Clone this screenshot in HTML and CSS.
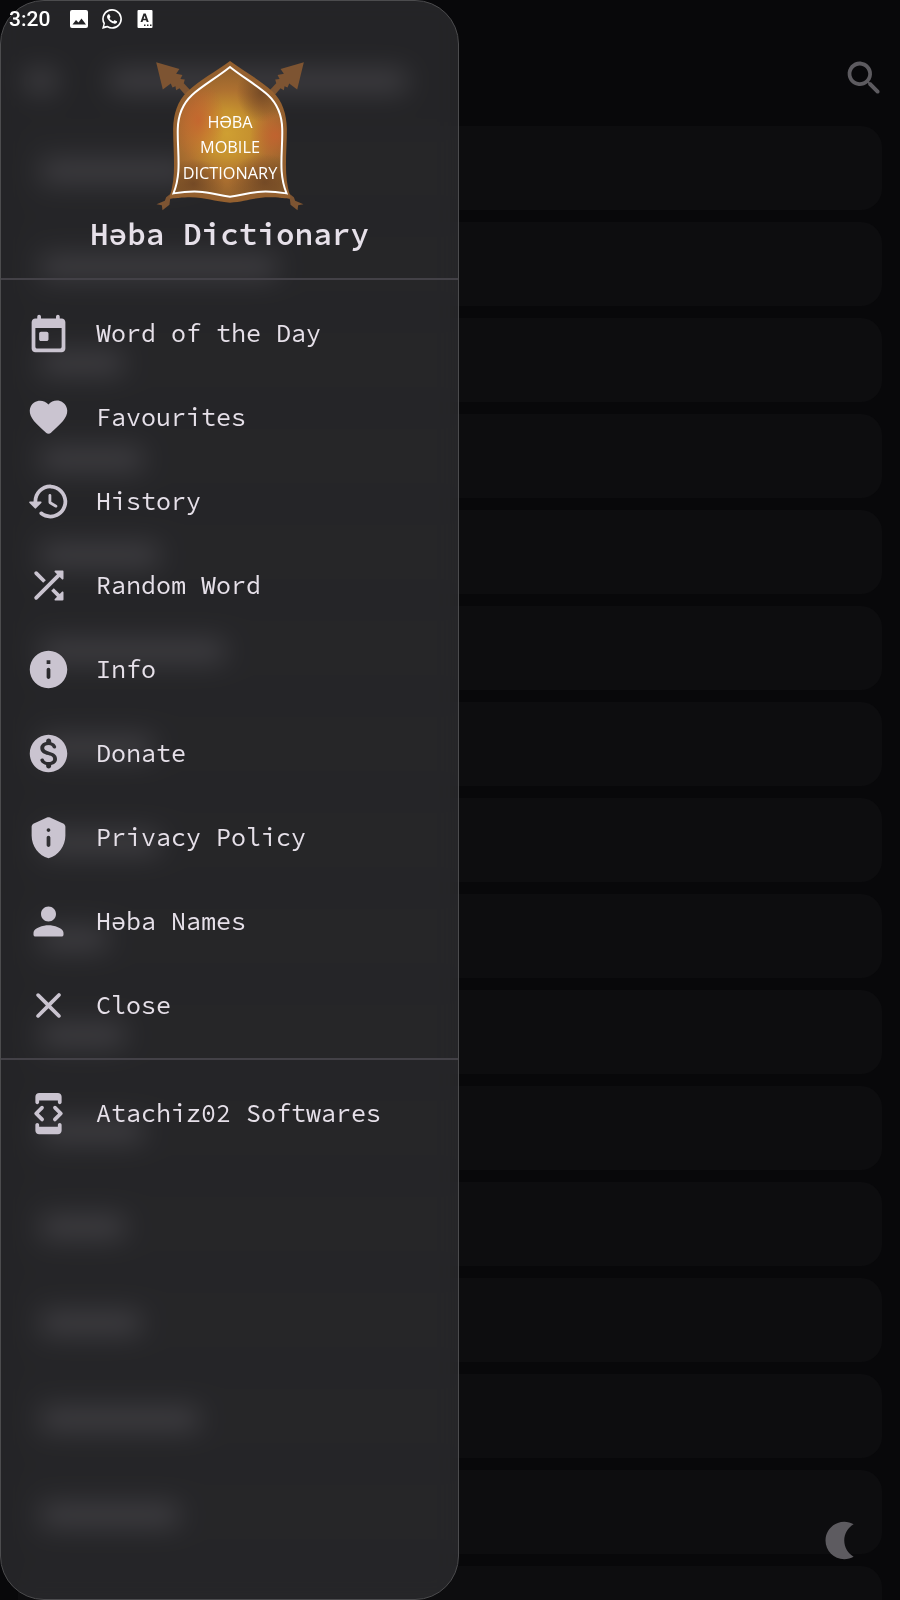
FILE: index.html
```html
<!DOCTYPE html>
<html lang="en">
<head>
<meta charset="utf-8">
<meta name="viewport" content="width=device-width, initial-scale=1">
<title>Həba Dictionary</title>
<link rel="stylesheet" href="styles.css">
</head>
<body>
<div class="app">
  <main class="page">
    <header class="app-bar">
      <span class="bar-menu"></span>
      <span class="bar-title"></span>
      <button class="icon-button" type="button" aria-label="Search">
        <svg class="icon" viewBox="0 0 24 24"><path d="M15.5 14h-.79l-.28-.27c1.2-1.4 1.82-3.31 1.48-5.34-.47-2.78-2.79-5-5.59-5.34-4.23-.52-7.79 3.04-7.27 7.27.34 2.8 2.56 5.12 5.34 5.59 2.03.34 3.94-.28 5.34-1.48l.27.28v.79l4.25 4.25c.41.41 1.08.41 1.49 0 .41-.41.41-1.08 0-1.49L15.5 14zm-6 0C7.01 14 5 11.99 5 9.5S7.01 5 9.5 5 14 7.01 14 9.5 11.99 14 9.5 14z"/></svg>
      </button>
    </header>
    <ul class="words">
      <li class="card"><span class="word" style="width:150px"></span></li>
      <li class="card"><span class="word" style="width:238px"></span></li>
      <li class="card"><span class="word" style="width:84px"></span></li>
      <li class="card"><span class="word" style="width:104px"></span></li>
      <li class="card"><span class="word" style="width:120px"></span></li>
      <li class="card"><span class="word" style="width:186px"></span></li>
      <li class="card"><span class="word" style="width:114px"></span></li>
      <li class="card"><span class="word" style="width:120px"></span></li>
      <li class="card"><span class="word" style="width:68px"></span></li>
      <li class="card"><span class="word" style="width:86px"></span></li>
      <li class="card"><span class="word" style="width:104px"></span></li>
      <li class="card"><span class="word" style="width:86px"></span></li>
      <li class="card"><span class="word" style="width:102px"></span></li>
      <li class="card"><span class="word" style="width:160px"></span></li>
      <li class="card"><span class="word" style="width:140px"></span></li>
      <li class="card"></li>
    </ul>
  </main>

  <button class="icon-button theme-toggle" type="button" aria-label="Dark mode">
    <svg class="icon" viewBox="0 0 24 24"><path d="M14 2c1.82 0 3.53.5 5 1.35-2.99 1.73-5 4.95-5 8.65s2.01 6.92 5 8.65C17.53 21.5 15.82 22 14 22 8.48 22 4 17.52 4 12S8.48 2 14 2z"/></svg>
  </button>

  <aside class="drawer">
    <div class="brand">
      <svg class="logo" viewBox="45 30 450 460" aria-hidden="true">
        <defs>
          <radialGradient id="glow" gradientUnits="userSpaceOnUse" cx="262" cy="255" r="215">
            <stop offset="0" stop-color="#cf9f32"/>
            <stop offset=".32" stop-color="#c6922f"/>
            <stop offset=".62" stop-color="#ad7030"/>
            <stop offset="1" stop-color="#8a5d2b"/>
          </radialGradient>
          <radialGradient id="ember"><stop offset="0" stop-color="#c6602f" stop-opacity=".8"/><stop offset="1" stop-color="#c6602f" stop-opacity="0"/></radialGradient>
          <radialGradient id="shade"><stop offset="0" stop-color="#6e4524" stop-opacity=".85"/><stop offset="1" stop-color="#6e4524" stop-opacity="0"/></radialGradient>
          <clipPath id="tent"><path d="M270 54C310 86 350 108 384 138C414 166 426 196 427 240C429 310 414 370 440 434C350 420 330 436 270 444C210 436 190 420 100 434C126 370 111 310 113 240C114 196 126 166 156 138C190 108 230 86 270 54Z"/></clipPath>
        </defs>
        <g fill="#7d5432">
          <path d="M48 40L118 60L108 74L127 78L121 90L134 92L131 103L160 134L144 148L118 118L108 124L106 112L97 116L92 104L68 122Z"/>
          <path d="M492 40L422 60L432 74L413 78L419 90L406 92L409 103L380 134L396 148L422 118L432 124L434 112L443 116L448 104L472 122Z"/>
          <path d="M98 430L78 446L74 456L49 467L65 470L67 485L88 468L90 452L108 444Z"/>
          <path d="M442 430L462 446L466 456L491 467L475 470L473 485L452 468L450 452L432 444Z"/>
        </g>
        <path fill="#94602f" d="M270 36C314 68 362 94 398 128C428 156 440 196 441 240C441 320 430 380 452 446C445 452 435 447 425 448C350 440 330 458 270 462C210 458 190 440 115 448C105 447 95 452 88 446C110 380 99 320 99 240C100 196 112 156 142 128C178 94 226 68 270 36Z"/>
        <g clip-path="url(#tent)">
          <path fill="url(#glow)" d="M90 40H450V460H90Z"/>
          <ellipse fill="url(#shade)" cx="365" cy="130" rx="75" ry="90"/>
          <ellipse fill="url(#ember)" cx="175" cy="215" rx="80" ry="120"/>
          <ellipse fill="url(#ember)" cx="408" cy="260" rx="80" ry="75"/>
          <ellipse fill="url(#shade)" cx="160" cy="405" rx="95" ry="75"/>
          <ellipse fill="url(#shade)" cx="375" cy="400" rx="110" ry="85"/>
        </g>
        <path fill="none" stroke="#fff" stroke-width="6" d="M270 54C310 86 350 108 384 138C414 166 426 196 427 240C429 310 414 370 440 434C350 420 330 436 270 444C210 436 190 420 100 434C126 370 111 310 113 240C114 196 126 166 156 138C190 108 230 86 270 54Z"/>
        <g class="logo-text">
          <text x="270" y="237">HƏBA</text>
          <text x="270" y="314">MOBILE</text>
          <text x="270" y="390">DICTIONARY</text>
        </g>
      </svg>
      <h1 class="brand-name">Həba Dictionary</h1>
    </div>

    <nav class="menu">
      <a class="item" href="#word-of-the-day"><svg class="icon" viewBox="0 0 24 24"><path d="M19 4h-1V3c0-.55-.45-1-1-1s-1 .45-1 1v1H8V3c0-.55-.45-1-1-1s-1 .45-1 1v1H5c-1.11 0-1.99.9-1.99 2L3 20c0 1.1.89 2 2 2h14c1.1 0 2-.9 2-2V6c0-1.1-.9-2-2-2zm0 15c0 .55-.45 1-1 1H6c-.55 0-1-.45-1-1V9h14v10zM8 11h3c.55 0 1 .45 1 1v3c0 .55-.45 1-1 1H8c-.55 0-1-.45-1-1v-3c0-.55.45-1 1-1z"/></svg><span>Word of the Day</span></a>
      <a class="item" href="#favourites"><svg class="icon" viewBox="0 0 24 24"><path d="M13.35 20.13c-.76.69-1.93.69-2.69-.01l-.11-.1C5.3 15.27 1.87 12.16 2 8.28c.06-1.7.93-3.33 2.34-4.29 2.64-1.8 5.9-.96 7.66 1.1 1.76-2.06 5.02-2.91 7.66-1.1 1.41.96 2.28 2.59 2.34 4.29.14 3.88-3.3 6.99-8.55 11.76l-.1.09z"/></svg><span>Favourites</span></a>
      <a class="item" href="#history"><svg class="icon" viewBox="0 0 24 24"><path d="M13.26 3C8.17 2.86 4 6.95 4 12H2.21c-.45 0-.67.54-.35.85l2.79 2.8c.2.2.51.2.71 0l2.79-2.8c.31-.31.09-.85-.36-.85H6c0-3.9 3.18-7.05 7.1-7 3.72.05 6.85 3.18 6.9 6.9.05 3.91-3.1 7.1-7 7.1-1.61 0-3.1-.55-4.28-1.48-.4-.31-.96-.28-1.32.08-.42.42-.39 1.13.08 1.49C9 20.29 10.91 21 13 21c5.05 0 9.14-4.17 9-9.26-.13-4.69-4.05-8.61-8.74-8.74zM12.75 8c-.41 0-.75.34-.75.75v3.68c0 .35.19.68.49.86l3.12 1.85c.36.21.82.09 1.03-.26.21-.36.09-.82-.26-1.03l-2.88-1.71v-3.4c0-.4-.34-.74-.75-.74z"/></svg><span>History</span></a>
      <a class="item" href="#random"><svg class="icon" viewBox="0 0 24 24"><path d="M10.59 9.17L6.12 4.7a1 1 0 0 0-1.41 0 1 1 0 0 0 0 1.41l4.46 4.46 1.42-1.4zm4.76-4.32l1.19 1.19L4.7 17.88a1 1 0 0 0 0 1.41c.39.39 1.02.39 1.41 0L17.96 7.46l1.19 1.19a.5.5 0 0 0 .85-.36V4.5c0-.28-.22-.5-.5-.5h-3.79a.5.5 0 0 0-.36.85zm-.52 8.56l-1.41 1.41 3.13 3.13-1.2 1.2a.5.5 0 0 0 .36.85h3.79c.28 0 .5-.22.5-.5v-3.79c0-.45-.54-.67-.85-.35l-1.19 1.19-3.13-3.14z"/></svg><span>Random Word</span></a>
      <a class="item" href="#info"><svg class="icon" viewBox="0 0 24 24"><path d="M12 2C6.48 2 2 6.48 2 12s4.48 10 10 10 10-4.48 10-10S17.52 2 12 2zm0 15c-.55 0-1-.45-1-1v-4c0-.55.45-1 1-1s1 .45 1 1v4c0 .55-.45 1-1 1zm1-8h-2V7h2v2z"/></svg><span>Info</span></a>
      <a class="item" href="#donate"><svg class="icon" viewBox="0 0 24 24"><path d="M12 2C6.48 2 2 6.48 2 12s4.48 10 10 10 10-4.48 10-10S17.52 2 12 2zm1.41 16.09v.58c0 .73-.6 1.33-1.33 1.33h-.01c-.73 0-1.33-.6-1.33-1.33v-.6c-1.33-.28-2.51-1.01-3.01-2.24-.23-.55.2-1.16.8-1.16h.24c.37 0 .67.25.81.6.29.75 1.05 1.27 2.51 1.27 1.96 0 2.4-.98 2.4-1.59 0-.83-.44-1.61-2.67-2.14-2.48-.6-4.18-1.62-4.18-3.67 0-1.72 1.39-2.84 3.11-3.21v-.6c0-.73.6-1.33 1.33-1.33h.01c.73 0 1.33.6 1.33 1.33v.62c1.38.34 2.25 1.2 2.63 2.26.2.55-.22 1.13-.81 1.13h-.26c-.37 0-.67-.26-.77-.62-.23-.76-.86-1.25-2.12-1.25-1.5 0-2.4.68-2.4 1.64 0 .84.65 1.39 2.67 1.91s4.18 1.39 4.18 3.91c-.02 1.83-1.39 2.83-3.13 3.16z"/></svg><span>Donate</span></a>
      <a class="item" href="#privacy"><svg class="icon" viewBox="0 0 24 24"><path d="M11.19 1.36l-7 3.11C3.47 4.79 3 5.51 3 6.3V11c0 5.55 3.84 10.74 9 12 5.16-1.26 9-6.45 9-12V6.3c0-.79-.47-1.51-1.19-1.83l-7-3.11c-.51-.23-1.11-.23-1.62 0zM12 7c.55 0 1 .45 1 1s-.45 1-1 1-1-.45-1-1 .45-1 1-1zm0 4c.55 0 1 .45 1 1v4c0 .55-.45 1-1 1s-1-.45-1-1v-4c0-.55.45-1 1-1z"/></svg><span>Privacy Policy</span></a>
      <a class="item" href="#names"><svg class="icon" viewBox="0 0 24 24"><path d="M12 12c2.21 0 4-1.79 4-4s-1.79-4-4-4-4 1.79-4 4 1.79 4 4 4zm0 2c-2.67 0-8 1.34-8 4v1c0 .55.45 1 1 1h14c.55 0 1-.45 1-1v-1c0-2.66-5.33-4-8-4z"/></svg><span>Həba Names</span></a>
      <a class="item" href="#close"><svg class="icon" viewBox="0 0 24 24"><path d="M18.3 5.71a1 1 0 0 0-1.41 0L12 10.59 7.11 5.7A1 1 0 0 0 5.7 7.11L10.59 12 5.7 16.89a1 1 0 0 0 1.41 1.41L12 13.41l4.89 4.89a1 1 0 0 0 1.41-1.41L13.41 12l4.89-4.89c.38-.38.38-1.02 0-1.4z"/></svg><span>Close</span></a>
    </nav>
    <nav class="menu">
      <a class="item" href="#softwares"><svg class="icon" viewBox="0 0 24 24"><path d="M7 5h10v1c0 .55.45 1 1 1s1-.45 1-1V3c0-1.1-.9-2-2-2L7 1.01C5.9 1.01 5 1.9 5 3v3c0 .55.45 1 1 1s1-.45 1-1V5zm9.12 10.88l3.17-3.17a1 1 0 0 0 0-1.41l-3.17-3.17a1 1 0 0 0-1.41 1.41L17.17 12l-2.46 2.46a1 1 0 0 0 1.41 1.42zm-6.83-1.42L6.83 12l2.46-2.46a1 1 0 0 0-1.41-1.41L4.71 11.3a1 1 0 0 0 0 1.41l3.17 3.17a1 1 0 0 0 1.41-1.42zM17 19H7v-1c0-.55-.45-1-1-1s-1 .45-1 1v3c0 1.1.9 2 2 2h10c1.1 0 2-.9 2-2v-3c0-.55-.45-1-1-1s-1 .45-1 1v1z"/></svg><span>Atachiz02 Softwares</span></a>
    </nav>
  </aside>

  <div class="status">
    <span class="clock">3:20</span>
    <svg class="status-icon" viewBox="0 0 20 20"><path fill-rule="evenodd" d="M3 1h14a2 2 0 0 1 2 2v14a2 2 0 0 1-2 2H3a2 2 0 0 1-2-2V3a2 2 0 0 1 2-2zM3.500 15.500h13.500L12.500 9.500l-3 4-2.500-2.500z"/></svg>
    <svg class="status-icon" viewBox="0 0 24 24"><path d="M17.500 14.400c-.3-.15-1.760-.87-2.030-.97-.27-.1-.47-.15-.67.15-.2.300-.77.970-.94 1.160-.17.200-.350.220-.64.080-.3-.15-1.260-.46-2.390-1.480-.88-.79-1.480-1.760-1.650-2.060-.17-.3-.02-.46.130-.61.130-.13.300-.35.450-.52.150-.17.200-.3.300-.5.100-.2.050-.37-.03-.52-.07-.15-.67-1.610-.92-2.210-.24-.58-.49-.5-.67-.51h-.57c-.2 0-.52.070-.79.370-.27.300-1.040 1.020-1.040 2.480s1.070 2.880 1.210 3.070c.15.200 2.100 3.200 5.080 4.490 2.980 1.280 2.980.86 3.520.8.540-.05 1.760-.72 2.010-1.410.25-.69.250-1.290.17-1.410-.07-.12-.27-.2-.53-.4zM.06 24l1.690-6.160A11.900 11.900 0 0 1 12.050 0c6.560 0 11.890 5.340 11.890 11.890 0 6.560-5.330 11.900-11.890 11.900-2 0-3.960-.5-5.690-1.450zM6.650 20.190a9.900 9.900 0 0 0 5.400 1.600 9.890 9.890 0 1 0-8.380-4.630l-1 3.650z"/></svg>
    <svg class="status-icon" viewBox="0 0 20 20"><path fill-rule="evenodd" d="M3.500 1h13a1 1 0 0 1 1 1v16a1 1 0 0 1-1 1h-13a1 1 0 0 1-1-1V2a1 1 0 0 1 1-1zM8.500 4.500L5.500 13h2l.6-1.700h3l.6 1.700h2l-3-8.500zm1.100 2.200l1 3.100h-2zM9 15.500v1.500h1.500v-1.500zm3 0v1.500h1.500v-1.500zm3 0v1.500h1.500v-1.500z"/></svg>
  </div>
</div>
</body>
</html>
```
FILE: styles.css
```css
* {
  box-sizing: border-box;
}

body {
  margin: 0;
  background: #08080a;
  color: #e6e0e9;
  font-family: "Source Code Pro", "Liberation Mono", monospace;
}

.app {
  position: relative;
  min-height: 100vh;
}

.page {
  position: absolute;
  inset: 0;
  overflow: hidden;
  padding: 30px 18px 0;
}

.app-bar {
  display: flex;
  align-items: center;
  height: 96px;
}

.bar-menu,
.bar-title,
.word {
  height: 24px;
  margin-top: 6px;
  border-radius: 10px;
  background: #57545a;
}

.bar-menu {
  width: 34px;
  margin-left: 6px;
}

.bar-title {
  width: 300px;
  margin-left: 50px;
}

.icon-button {
  display: flex;
  padding: 0;
  border: 0;
  background: none;
  color: #5d5b60;
  cursor: pointer;
}

.app-bar .icon-button {
  margin: 0 -5px 0 auto;
}

.icon {
  flex: none;
  width: 45px;
  height: 45px;
  fill: currentColor;
}

.words {
  display: flex;
  flex-direction: column;
  gap: 12px;
  margin: 0;
  padding: 0;
  list-style: none;
}

.card {
  display: flex;
  flex: none;
  align-items: center;
  height: 84px;
  padding-left: 22px;
  border-radius: 21px;
  background: #0d0d0f;
}

.theme-toggle {
  position: absolute;
  right: 37px;
  bottom: 37px;
}

.drawer {
  position: relative;
  width: 51%;
  min-height: 100vh;
  border: 1px solid #4c4c4e;
  border-radius: 44px;
  background: rgba(50, 50, 53, 0.68);
  backdrop-filter: blur(13px);
}

.brand {
  display: flex;
  flex-direction: column;
  align-items: center;
  padding: 58px 12px 24px;
}

.logo {
  width: 150px;
  height: 153px;
}

.logo-text {
  fill: #fff;
  font-family: "Open Sans", sans-serif;
  font-size: 49px;
  text-anchor: middle;
}

.brand-name {
  margin: 2px 0 0;
  font-size: 31px;
  font-weight: 600;
  line-height: 40px;
}

.menu {
  padding: 11px 0;
  border-top: 2px solid #434147;
}

.item {
  display: flex;
  align-items: center;
  gap: 25px;
  height: 84px;
  padding-left: 25px;
  color: #e6e0e9;
  font-size: 25px;
  line-height: 32px;
  text-decoration: none;
}

.item .icon {
  color: #cac4d0;
}

.status {
  position: absolute;
  top: 0;
  left: 0;
  display: flex;
  align-items: center;
  gap: 13px;
  height: 37px;
  padding-left: 9px;
  color: #fff;
}

.clock {
  margin-right: 6px;
  font: 500 21px/24px Roboto, sans-serif;
}

.status-icon {
  width: 20px;
  height: 20px;
  fill: currentColor;
}
```
